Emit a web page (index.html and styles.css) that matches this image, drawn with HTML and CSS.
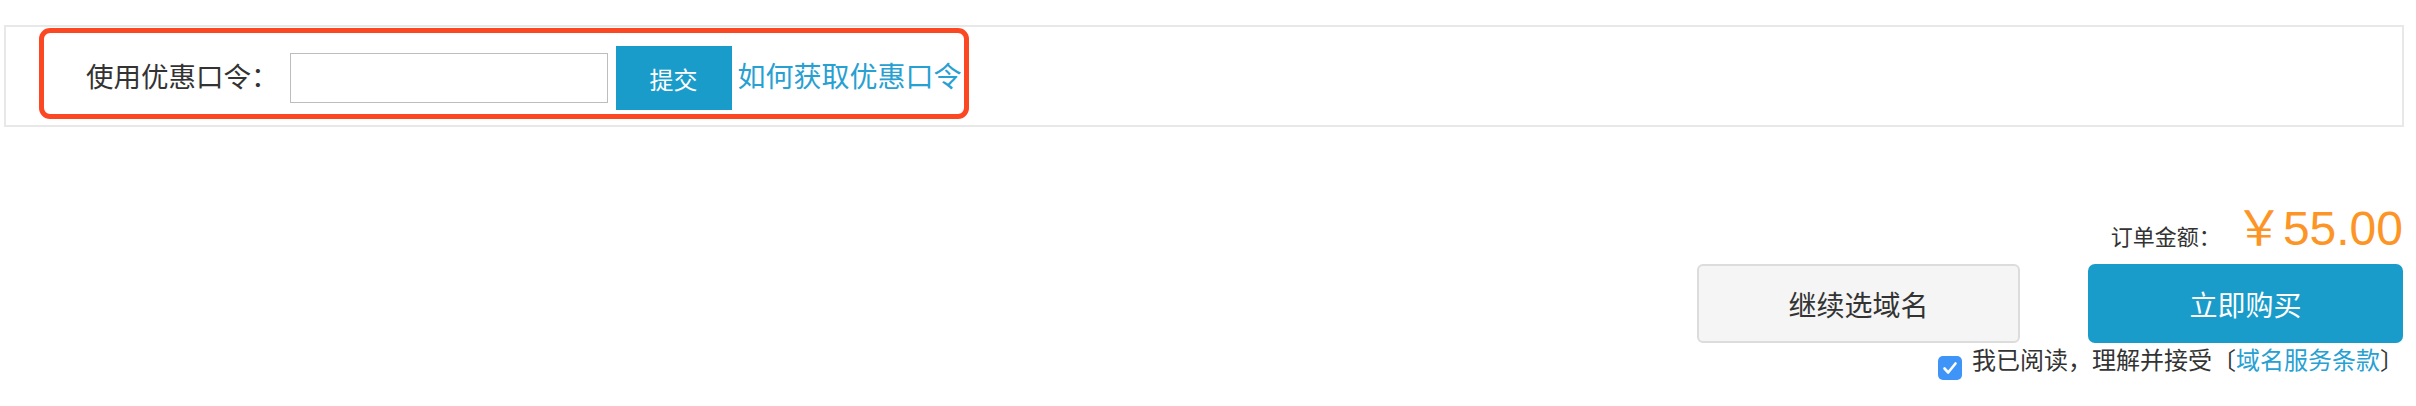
FILE: index.html
```html
<!DOCTYPE html>
<html lang="zh-CN">
<head>
    <meta charset="UTF-8">
    <title>域名订单</title>
    <link rel="stylesheet" href="styles.css">
</head>
<body>
    <div class="coupon-box">
        <div class="coupon-mark">
            <span class="coupon-label">使用优惠口令：</span>
            <input type="text" class="coupon-input">
            <button class="coupon-submit">提交</button>
            <a href="#" class="coupon-help">如何获取优惠口令</a>
        </div>
    </div>

    <div class="order">
        <div class="order-total">
            <span class="total-label">订单金额：</span>
            <span class="price">￥55.00</span>
        </div>
        <div class="order-actions">
            <button class="btn-continue">继续选域名</button>
            <button class="btn-buy">立即购买</button>
        </div>
        <div class="agree">
            <span class="check">
                <svg width="24" height="24" viewBox="0 0 24 24"><path d="M6.5 12.5 L10.2 16.5 L17.5 7.5" fill="none" stroke="#fff" stroke-width="2.6" stroke-linecap="round" stroke-linejoin="round"/></svg>
            </span>
            <span class="agree-text">我已阅读，理解并接受〔<a href="#">域名服务条款</a>〕</span>
        </div>
    </div>
</body>
</html>
```

FILE: styles.css
```css
body {
    margin: 0;
    font-family: "Liberation Sans", "Noto Sans CJK SC", sans-serif;
    color: #333;
    background-color: #fff;
}
a {
    text-decoration: none;
}
button {
    font-family: "Liberation Sans", "Noto Sans CJK SC", sans-serif;
    cursor: pointer;
}
.coupon-box {
    margin: 25px 12px 0 4px;
    height: 98px;
    border: 2px solid #e8e8e8;
}
.coupon-mark {
    display: inline-flex;
    align-items: center;
    margin: 1px 0 0 33px;
    padding: 13px 2px 4px 42px;
    border: 5px solid #fc4723;
    border-radius: 11px;
}
.coupon-label {
    font-size: 27.5px;
    line-height: 32px;
    margin-right: 11px;
}
.coupon-input {
    box-sizing: border-box;
    width: 318px;
    height: 50px;
    border: 1px solid #bdbdbd;
    margin: 0 8px 0 0;
    padding: 0 8px;
}
.coupon-submit {
    width: 116px;
    height: 64px;
    border: none;
    background-color: #1a9ccb;
    color: #fff;
    font-size: 24px;
    margin-right: 6px;
}
.coupon-help {
    color: #27a0d2;
    font-size: 28px;
    line-height: 32px;
}
.order {
    display: flex;
    flex-direction: column;
    align-items: flex-end;
    margin-top: 78px;
    padding-right: 13px;
}
.order-total {
    display: flex;
    align-items: baseline;
    height: 59px;
}
.total-label {
    font-size: 22px;
    line-height: 26px;
    margin-right: 14px;
}
.price {
    color: #fd9526;
    font-size: 48px;
    line-height: 48px;
}
.order-actions {
    display: flex;
    gap: 68px;
}
.btn-continue {
    width: 323px;
    height: 79px;
    background-color: #f5f5f5;
    border: 2px solid #dcdcdc;
    border-radius: 6px;
    color: #333;
    font-size: 28px;
}
.btn-buy {
    width: 315px;
    height: 79px;
    background-color: #1a9ccb;
    border: none;
    border-radius: 7px;
    color: #fff;
    font-size: 28px;
}
.agree {
    display: flex;
    align-items: flex-start;
    margin-top: 4px;
    margin-right: -1px;
}
.check {
    width: 24px;
    height: 24px;
    margin-top: 9px;
    margin-right: 10px;
    border-radius: 5px;
    background-color: #3e95f7;
}
.check svg {
    display: block;
}
.agree-text {
    font-size: 24px;
    line-height: 28px;
}
.agree-text a {
    color: #27a0d2;
}
```
